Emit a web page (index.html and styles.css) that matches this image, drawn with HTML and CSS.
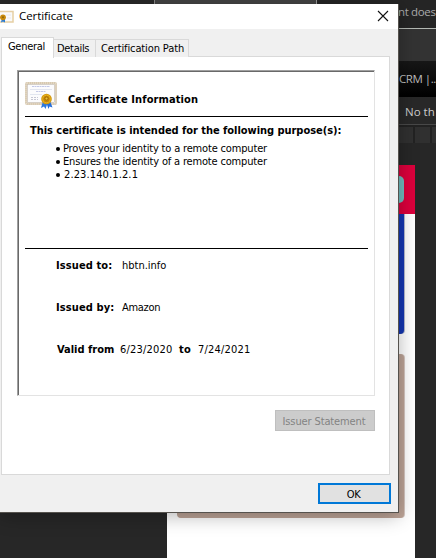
FILE: index.html
```
<!DOCTYPE html>
<html lang="en">
<head>
<meta charset="utf-8">
<title>Certificate</title>
<link rel="stylesheet" href="styles.css">
</head>
<body>
<div class="desktop">
  <div class="browser">
    <div class="strip tabs"><span>nt does</span></div>
    <div class="strip gap"></div>
    <div class="strip title"><span>CRM |..</span></div>
    <div class="strip bookmarks"><span>No th</span></div>
    <div class="strip ruler"><i></i><i></i><i></i></div>
    <div class="page">
      <div class="page-header"><div class="pill"></div></div>
      <div class="blue-card"></div>
      <div class="tan-card"></div>
    </div>
  </div>
  <main class="dialog">
    <header class="titlebar">
      <svg class="small-icon" width="14" height="14" viewBox="0 0 14 14"><path d="M-2 1.5H13V12H-2Z" fill="#fafafa" stroke="#e6cfa4" stroke-width="1.5"/><path d="M6 5h5M7 8h4" stroke="#e8e8ee"/><path d="M2 8L1 12.500L3 11.500L5 12.500L5 8" fill="#267bd8"/><circle cx="3" cy="7.300" r="2.900" fill="#c98a0a"/><circle cx="3" cy="7.300" r="1" fill="#8d650d"/></svg>
      <h1>Certificate</h1>
      <svg class="close" width="12" height="12" viewBox="0 0 12 12"><path d="M1 1L11 11M11 1L1 11" stroke="#111" stroke-width="1.100"/></svg>
    </header>
    <nav class="tablist"><span class="tab active">General</span><span class="tab details">Details</span><span class="tab path">Certification Path</span></nav>
    <section class="panel">
      <div class="info">
        <div class="info-head">
          <svg width="33" height="29" viewBox="0 0 33 29"><rect x="1" y="1" width="30" height="21" rx="1" fill="#fbfbfd" stroke="#d6c8b0" stroke-width="2"/><rect x="1" y="1" width="30" height="21" rx="1" fill="none" stroke="#eee5d5" stroke-width="1.200" stroke-dasharray="1 1"/><rect x="2.500" y="2.500" width="27" height="18" fill="none" stroke="#bfb5a6" stroke-width=".6"/><path d="M7 4.500H25M11 9.500H21" stroke="#c3c8e6" stroke-dasharray="2 .5"/><path d="M5 7.500H27M5 12.500H17" stroke="#e2e6f0"/><path d="M6 15.500H13M6 17.500H13" stroke="#c6c7d4" stroke-dasharray="2 1"/><path d="M18 19L16 26L19 24.500L20.500 27L23 20Z" fill="#2d79dc"/><path d="M21 20L23.500 27L24.500 24.500L27.500 25.500L25 19Z" fill="#246dda"/><circle cx="21.500" cy="17" r="5.300" fill="#d49a0d"/><circle cx="21.500" cy="17" r="3.800" fill="#c48407" stroke="#e8b421"/><circle cx="21.500" cy="16.500" r="1.500" fill="#edc036" stroke="#956405" stroke-width=".8"/></svg>
          <h2>Certificate Information</h2>
        </div>
        <div class="purposes">
          <h3>This certificate is intended for the following purpose(s):</h3>
          <ul>
            <li>Proves your identity to a remote computer</li>
            <li>Ensures the identity of a remote computer</li>
            <li class="oid">2.23.140.1.2.1</li>
          </ul>
        </div>
        <div class="facts">
          <p><b class="label">Issued to:</b><span>hbtn.info</span></p>
          <p><b class="label">Issued by:</b><span class="issuer-name">Amazon</span></p>
          <p><b class="valid">Valid from</b><span class="date">6/23/2020</span><b class="to">to</b><span class="date">7/24/2021</span></p>
        </div>
      </div>
      <button class="issuer" disabled>Issuer Statement</button>
    </section>
    <footer><button class="ok">OK</button></footer>
  </main>
</div>
</body>
</html>
```
FILE: styles.css
```
* { box-sizing: border-box; }
body, h1, h2, h3, p, ul { margin: 0; padding: 0; }
body { font: 11px/13px "DejaVu Sans Condensed", "DejaVu Sans", sans-serif; font-stretch: condensed; color: #000; overflow: hidden; }
.desktop { position: relative; width: 436px; height: 558px; overflow: hidden; white-space: nowrap; }
.browser { height: 558px; background: #272727; color: #aaa; font-family: "Open Sans", sans-serif; font-stretch: normal; display: flex; flex-direction: column; }
.strip { flex: none; padding-left: 399px; overflow: hidden; }
.tabs { height: 29px; background: linear-gradient(90deg, #292929 154px, #888 154px 155px, #444 155px 316px, #999 316px 317px, #252525 317px); border-bottom: 1px solid #b3b8b3; padding: 5px 0 0 398px; font-size: 11.500px; letter-spacing: -.35px; }
.gap { height: 32px; background: #333; }
.title { height: 36px; background: linear-gradient(#171717, #000); padding-top: 11px; font-size: 11.500px; color: #bbb; letter-spacing: -.45px; }
.bookmarks { height: 28px; background: #282828; padding: 8px 0 0 405px; font-size: 11.500px; color: #ccc; border-bottom: 1px solid #484848; }
.ruler { height: 18px; display: flex; gap: 2px; padding: 2px 0 0 398px; background: #222; }
.ruler i { flex: none; width: 15px; background: #303030; }
.page { width: 248px; margin: 22px 0 0 167px; flex: 1; background: #fff; }
.page-header { height: 49px; background: #dc003c; padding: 11px 11px 0 0; }
.pill { width: 80px; height: 27px; border-radius: 5px; background: #70bdbf; margin-left: auto; }
.blue-card { width: 227px; height: 120px; margin-left: 10px; background: #1436b2; border-radius: 0 0 4px 4px; box-shadow: 1px 0 #b4bacd; }
.tan-card { width: 227px; height: 164px; margin: 20px 0 0 10px; background: #bda497; border-radius: 4px; box-shadow: 1px 0 #d5c7c1; }
.dialog { position: absolute; left: 0; top: 4px; width: 399px; height: 509px; background: #f0f0f0; border-right: 1px solid #55524d; border-bottom: 1px solid #55524d; box-shadow: 0 3px 18px rgba(0,0,0,.3); }
.titlebar { display: flex; align-items: center; height: 25px; background: #fff; padding-right: 9px; }
.small-icon { margin-top: 1px; }
h1 { font: 11.500px/16px "Open Sans", sans-serif; margin: -2px 0 0 5px; letter-spacing: -.07px; }
.close { margin: -2px 0 0 auto; }
.tablist { display: flex; align-items: flex-end; height: 27px; margin-top: 1px; padding-left: 1px; }
.tab { height: 18px; border: 1px solid #d9d9d9; border-left: 0; border-bottom: 0; padding: 2px 0 0 3px; background: #f0f0f0; letter-spacing: -.3px; }
.active { position: relative; z-index: 1; width: 53px; height: 21px; margin-bottom: -1px; border-left: 1px solid #d9d9d9; padding: 2px 0 0 6px; background: #fff; }
.details { width: 42px; }
.path { width: 93px; padding-left: 5px; letter-spacing: -.12px; }
.panel { width: 389px; height: 419px; margin: -1px 0 0 1px; border: 1px solid #d9d9d9; background: #fff; padding: 13px 14px 0 15px; display: flex; flex-direction: column; align-items: flex-end; }
.info { width: 358px; height: 326px; border: 1px solid; border-color: #a0a0a0 #e3e3e3 #e3e3e3 #a0a0a0; box-shadow: inset 1px 1px #696969; padding: 1px 6px 0 7px; }
.info-head { height: 45px; border-bottom: 1px solid #000; display: flex; padding-top: 10px; }
h2 { font: bold 11px/14px "DejaVu Sans Condensed", sans-serif; margin: 11px 0 0 10px; letter-spacing: .1px; }
.purposes { height: 132px; border-bottom: 1px solid #000; padding: 7px 0 0 5px; }
h3 { font: bold 11px/13px "DejaVu Sans Condensed", sans-serif; margin-bottom: 5px; letter-spacing: -.04px; }
ul { list-style: none; padding-left: 26px; }
li { display: flex; align-items: center; height: 13px; letter-spacing: -.17px; }
li::before { content: ""; width: 4px; height: 4px; border-radius: 2px; background: #000; margin-right: 3px; }
.oid { letter-spacing: .12px; }
.oid::before { margin-right: 4px; }
.facts { padding: 10px 0 0 31px; }
.facts p { display: flex; height: 42px; }
.facts b, .facts span { flex: none; }
.label { width: 66px; letter-spacing: .1px; }
.issuer-name { letter-spacing: -.3px; }
.valid { width: 64px; padding-left: 1px; }
.date { width: 59px; letter-spacing: .2px; }
.to { width: 19px; letter-spacing: .2px; }
button { font: inherit; padding: 0; border-radius: 0; }
.issuer { width: 100px; height: 21px; margin-top: 14px; padding: 1px 2px 0 0; background: #ccc; border: 1px solid #bfbfbf; color: #838383; letter-spacing: -.12px; }
footer { display: flex; justify-content: flex-end; padding: 8px 7px 0 0; }
.ok { width: 73px; height: 21px; padding: 1px 2px 0 0; background: #e1e1e1; border: 2px solid #0078d7; color: #000; letter-spacing: -.3px; }
```
